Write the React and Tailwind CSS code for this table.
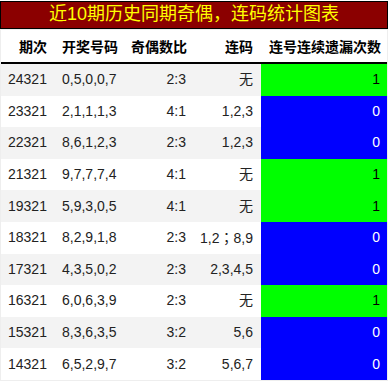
const rows = [
  ["24321", "0,5,0,0,7", "2:3", "无", 1],
  ["23321", "2,1,1,1,3", "4:1", "1,2,3", 0],
  ["22321", "8,6,1,2,3", "2:3", "1,2,3", 0],
  ["21321", "9,7,7,7,4", "4:1", "无", 1],
  ["19321", "5,9,3,0,5", "4:1", "无", 1],
  ["18321", "8,2,9,1,8", "2:3", "1,2；8,9", 0],
  ["17321", "4,3,5,0,2", "2:3", "2,3,4,5", 0],
  ["16321", "6,0,6,3,9", "2:3", "无", 1],
  ["15321", "8,3,6,3,5", "3:2", "5,6", 0],
  ["14321", "6,5,2,9,7", "3:2", "5,6,7", 0],
];

const cols = "grid grid-cols-[53px_71px_69px_67px_126px]";

// fullwidth semicolon sits centred in the TC face, like the reference
const Lianma = ({ text }) => {
  const parts = text.split("；");
  if (parts.length === 1) return text;
  return (
    <>
      {parts[0]}
      <span style={{ fontFamily: '"Noto Sans CJK TC", sans-serif' }}>；</span>
      {parts[1]}
    </>
  );
};

export default function App() {
  return (
    <div
      className="w-[388px] h-[385px] bg-white text-[#222] overflow-hidden"
      style={{ fontFamily: '"Liberation Sans", "Noto Sans CJK SC", sans-serif' }}
    >
      <div className="h-[28px] mt-px bg-[#8b0000] border border-black text-[#ffff00] text-[18px] leading-[25px] text-center">
        近10期历史同期奇偶，连码统计图表
      </div>
      <div className="border border-[#eeeeee]">
        <div className={`${cols} h-[34px] items-center text-[14px] font-bold text-black border-b-2 border-black`}>
          <div className="pl-[18px] pt-[2px]">期次</div>
          <div className="pl-[8px] pt-[2px]">开奖号码</div>
          <div className="pr-[7px] pt-[2px] text-right">奇偶数比</div>
          <div className="pr-[8px] pt-[2px] text-right">连码</div>
          <div className="pr-[6px] pt-[2px] text-right">连号连续遗漏次数</div>
        </div>
        {rows.map((r, i) => (
          <div
            key={r[0]}
            className={`${cols} h-[31.6px] items-center text-[14px] ${i % 2 === 0 ? "bg-[#f3f3f3]" : "bg-white"}`}
          >
            <div className="pl-[7px]">{r[0]}</div>
            <div className="pl-[8px]">{r[1]}</div>
            <div className="pr-[8px] text-right">{r[2]}</div>
            <div className="pr-[8px] text-right">
              <Lianma text={r[3]} />
            </div>
            <div
              className={`h-full flex items-center justify-end pr-[7px] ${
                r[4] === 1 ? "bg-[#00ff00] text-black" : "bg-[#0000ff] text-white"
              }`}
            >
              {r[4]}
            </div>
          </div>
        ))}
      </div>
    </div>
  );
}
